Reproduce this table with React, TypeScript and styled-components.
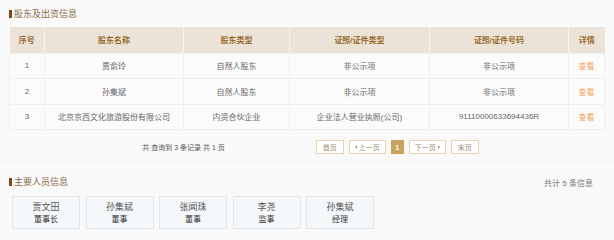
import React from "react";
import styled, { createGlobalStyle } from "styled-components";

const Global = createGlobalStyle`
  html, body { margin: 0; padding: 0; background: #f9f9f9; }
  body { font-family: "Liberation Sans", "Noto Sans CJK SC", sans-serif; color: #666; }
  * { box-sizing: border-box; }
`;

const Page = styled.div`
  width: 614px;
  height: 240px;
  overflow: hidden;
  background: #f9f9f9;
`;

const Section = styled.section<{ $last?: boolean }>`
  padding: 0 10px 0 9px;
  border-bottom: ${(p) => (p.$last ? "none" : "1px solid #f0f0f0")};
`;

const TitleRow = styled.div<{ $h: number; $top?: number }>`
  display: flex;
  align-items: center;
  justify-content: space-between;
  height: ${(p) => p.$h}px;
  padding-top: ${(p) => p.$top ?? 0}px;
`;

const Title = styled.h3`
  margin: 0;
  display: flex;
  align-items: center;
  gap: 2px;
  font-size: 9px;
  font-weight: normal;
  color: #8a6a48;
  line-height: 12px;
  &::before {
    content: "";
    display: block;
    width: 3px;
    height: 8px;
    background: #7e4a1c;
  }
`;

const Count = styled.span`
  font-size: 8px;
  color: #777;
  margin-right: 11px;
`;

const Table = styled.table`
  width: 595px;
  border-collapse: collapse;
  table-layout: fixed;
  font-size: 8px;
  background: #fbfbfb;
`;

const Th = styled.th<{ $w: number }>`
  width: ${(p) => p.$w}px;
  height: 26px;
  background: #ebe3d7;
  color: #9a6a2c;
  font-weight: bold;
  text-align: center;
  border-left: 1px solid #f6f2ec;
  padding: 0;
  &:first-child { border-left: none; }
`;

const Td = styled.td`
  height: 25.5px;
  text-align: center;
  color: #666;
  border: 1px solid #efefef;
  padding: 0;
`;

const Link = styled.a`
  color: #f3a562;
  text-decoration: none;
`;

const PagerRow = styled.div`
  display: flex;
  align-items: center;
  justify-content: center;
  gap: 91px;
  height: 31px;
  padding-top: 3px;
  padding-left: 8px;
`;

const Summary = styled.span`
  font-size: 7px;
  color: #555;
`;

const Pager = styled.div`
  display: flex;
  gap: 5px;
`;

const PageBtn = styled.span<{ $active?: boolean; $w: number }>`
  display: inline-flex;
  align-items: center;
  justify-content: center;
  gap: 2px;
  width: ${(p) => p.$w}px;
  height: 14px;
  font-size: 7px;
  border: 1px solid ${(p) => (p.$active ? "#c9a35b" : "#e6d5ad")};
  background: ${(p) => (p.$active ? "#c9a35b" : "#fff")};
  color: ${(p) => (p.$active ? "#fff" : "#9a8a70")};
  font-weight: ${(p) => (p.$active ? "bold" : "normal")};
`;

const Arrow = styled.span<{ $dir: "l" | "r" }>`
  width: 0;
  height: 0;
  border-top: 2px solid transparent;
  border-bottom: 2px solid transparent;
  ${(p) => (p.$dir === "l" ? "border-right: 2px solid #b39a70;" : "border-left: 2px solid #b39a70;")}
`;

const Cards = styled.div`
  display: flex;
  gap: 5.5px;
  padding-left: 3px;
`;

const Card = styled.div`
  width: 68px;
  height: 33px;
  background: #f5f8fa;
  border: 1px solid #e2e6e9;
  display: flex;
  flex-direction: column;
  align-items: center;
  justify-content: center;
  gap: 1px;
`;

const Name = styled.span`
  font-size: 9px;
  color: #555;
  line-height: 12px;
`;

const Role = styled.span`
  font-size: 8px;
  color: #333;
  line-height: 11px;
`;

const cols = [35, 139, 106, 140, 139, 36];
const heads = ["序号", "股东名称", "股东类型", "证照/证件类型", "证照/证件号码", "详情"];
const rows = [
  ["1", "贾俞玲", "自然人股东", "非公示项", "非公示项"],
  ["2", "孙集斌", "自然人股东", "非公示项", "非公示项"],
  ["3", "北京京西文化旅游股份有限公司", "内资合伙企业", "企业法人营业执照(公司)", "91110000633694436R"],
];
const people = [
  ["贾文田", "董事长"],
  ["孙集斌", "董事"],
  ["张闻珠", "董事"],
  ["李尧", "监事"],
  ["孙集斌", "经理"],
];

export default function App() {
  return (
    <Page>
      <Global />
      <Section>
        <TitleRow $h={27}>
          <Title>股东及出资信息</Title>
        </TitleRow>
        <Table>
          <thead>
            <tr>
              {heads.map((h, i) => (
                <Th key={h} $w={cols[i]}>{h}</Th>
              ))}
            </tr>
          </thead>
          <tbody>
            {rows.map((r) => (
              <tr key={r[0]}>
                {r.map((c, i) => (
                  <Td key={i}>{c}</Td>
                ))}
                <Td>
                  <Link>查看</Link>
                </Td>
              </tr>
            ))}
          </tbody>
        </Table>
        <PagerRow>
          <Summary>共 查询到 3 条记录 共 1 页</Summary>
          <Pager>
            <PageBtn $w={28}>首页</PageBtn>
            <PageBtn $w={37}><Arrow $dir="l" />上一页</PageBtn>
            <PageBtn $w={13} $active>1</PageBtn>
            <PageBtn $w={37}>下一页<Arrow $dir="r" /></PageBtn>
            <PageBtn $w={28}>末页</PageBtn>
          </Pager>
        </PagerRow>
      </Section>
      <Section $last>
        <TitleRow $h={34} $top={6}>
          <Title>主要人员信息</Title>
          <Count>共计 5 条信息</Count>
        </TitleRow>
        <Cards>
          {people.map(([n, r], i) => (
            <Card key={i}>
              <Name>{n}</Name>
              <Role>{r}</Role>
            </Card>
          ))}
        </Cards>
      </Section>
    </Page>
  );
}
